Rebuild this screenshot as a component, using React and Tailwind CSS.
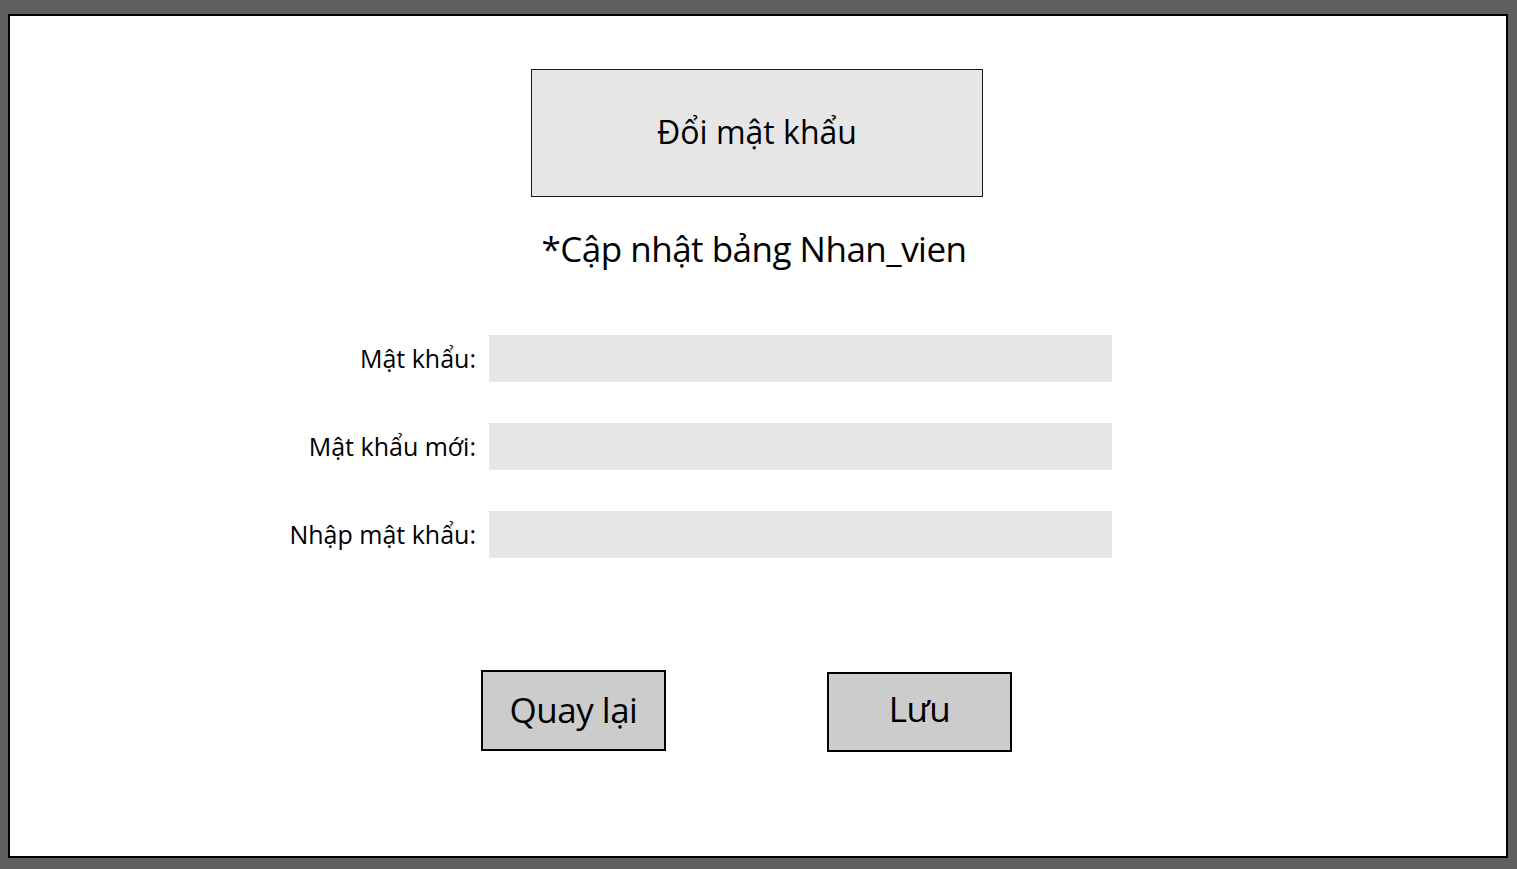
export default function App() {
  const fields = ['Mật khẩu:', 'Mật khẩu mới:', 'Nhập mật khẩu:'];

  return (
    <div className="h-screen w-full bg-[#5f5f5f] pt-[14px] pl-[8px] pr-[9px] pb-[11px]" style={{ fontFamily: '"Open Sans", "Noto Sans", sans-serif' }}>
      <div className="h-full w-full bg-white border-2 border-black flex flex-col">
        <div className="mt-[53px] ml-[521px] w-[452px] h-[128px] bg-[#e6e6e6] border-[1.5px] border-[#1a1a1a] flex items-center justify-center">
          <span className="text-[32px] text-black leading-none pb-[2px]">Đổi mật khẩu</span>
        </div>

        <div className="mt-[30px] h-[44px] flex justify-center pr-[8px]">
          <span className="text-[35px] leading-[44px] text-black tracking-[-0.5px]">*Cập nhật bảng Nhan_vien</span>
        </div>

        <div className="mt-[64px] ml-[266px] grid grid-cols-[200px_623px] gap-x-[13px] gap-y-[41px]">
          {fields.map((label) => (
            <div key={label} className="contents">
              <div className="h-[47px] flex items-center justify-end text-[25px] text-black">
                {label}
              </div>
              <div className="h-[47px] bg-[#e6e6e6]" />
            </div>
          ))}
        </div>

        <div className="mt-[112px] ml-[471px] flex items-start gap-[161px]">
          <button className="w-[185px] h-[81px] bg-[#cccccc] border-2 border-black text-[35px] text-black flex items-center justify-center tracking-[-0.5px]">
            Quay lại
          </button>
          <button className="mt-[2px] w-[185px] h-[80px] bg-[#cccccc] border-2 border-black text-[35px] text-black flex items-center justify-center pb-[6px] tracking-[-0.5px]">
            Lưu
          </button>
        </div>
      </div>
    </div>
  );
}
